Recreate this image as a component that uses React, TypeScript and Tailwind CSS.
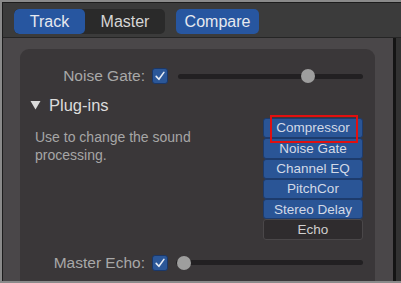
import React from "react";

function Check() {
  return (
    <div className="w-[16px] h-[16px] rounded-[3px] bg-[#2b5798] border border-[#1a3768] flex items-center justify-center shrink-0">
      <svg width="12" height="12" viewBox="0 0 12 12" fill="none">
        <path d="M2.2 6.4 L4.9 9.3 L9.9 2.4" stroke="#e6ecf5" strokeWidth="1.6" strokeLinecap="round" strokeLinejoin="round" />
      </svg>
    </div>
  );
}

function Slider({ width, pos }: { width: number; pos: number }) {
  return (
    <div className="relative h-[16px] flex items-center" style={{ width }}>
      <div className="w-full h-[5px] rounded-full bg-[#222022]" />
      <div
        className="absolute top-[1px] w-[14px] h-[14px] rounded-full bg-[#9e9e9e]"
        style={{ left: pos - 7 }}
      />
    </div>
  );
}

const plugins = [
  { name: "Compressor", on: true },
  { name: "Noise Gate", on: true },
  { name: "Channel EQ", on: true },
  { name: "PitchCor", on: true },
  { name: "Stereo Delay", on: true },
  { name: "Echo", on: false },
];

export default function App() {
  return (
    <div
      className="w-[401px] h-[283px] bg-[#8a8a8a] pt-[2px] pl-[2px] pb-[2px] flex flex-col overflow-hidden"
      style={{ fontFamily: '"Liberation Sans", Arial, sans-serif' }}
    >
      <div className="flex-1 bg-[#1c1c1c] pt-px pl-px flex flex-col min-h-0">
        {/* toolbar */}
        <div className="h-[35px] bg-[#3b3b3b] border-b border-[#252525] flex items-start pt-[6px] pl-[11px] shrink-0">
          <div className="flex h-[25px] rounded-[5px] bg-[#2a2a2a] overflow-hidden">
            <div className="w-[71px] bg-[#2756a0] text-[#e6e9ef] text-[16px] flex items-center justify-center rounded-[5px]">
              Track
            </div>
            <div className="w-[80px] text-[#d6d6d6] text-[16px] flex items-center justify-center">
              Master
            </div>
          </div>
          <div className="ml-[11px] w-[83px] h-[25px] rounded-[5px] bg-[#2756a0] text-[#e6e9ef] text-[16px] flex items-center justify-center">
            Compare
          </div>
        </div>
        {/* body */}
        <div className="flex-1 flex min-h-0">
          <div className="w-[390px] bg-[#4a4749] pl-[17px] pt-[11px] pr-[18px] flex flex-col">
            <div className="flex-1 bg-[#3a3739] rounded-t-[9px] flex flex-col relative">
              {/* noise gate row */}
              <div className="flex items-center mt-[19px] h-[16px]">
                <div className="w-[125px] text-right text-[15.5px] text-[#a8a8a8] leading-none">Noise Gate:</div>
                <div className="ml-[7px]">
                  <Check />
                </div>
                <div className="ml-[10px]">
                  <Slider width={185} pos={130} />
                </div>
              </div>
              {/* plug-ins header */}
              <div className="flex items-center h-[20px] mt-[11px] pl-[10px]">
                <svg width="11" height="10" viewBox="0 0 11 10">
                  <path d="M0.5 1 L10.5 1 L5.5 9.5 Z" fill="#dadada" />
                </svg>
                <span className="ml-[8px] text-[16.5px] text-[#dcdcdc] leading-none">Plug-ins</span>
              </div>
              {/* description + list */}
              <div className="flex mt-[3px]">
                <div className="w-[243px] pl-[15px] pt-[10px] text-[14px] leading-[18px] text-[#a6a6a6]">
                  Use to change the sound
                  <br />
                  processing.
                </div>
                <div className="w-[100px] flex flex-col relative">
                  {plugins.map((p) => (
                    <div
                      key={p.name}
                      className={
                        p.on
                          ? "h-[20.3px] bg-[#2a5596] border border-[#1d3b6c] rounded-[3px] text-[#d2d9e6] text-[13.5px] flex items-center justify-center leading-none"
                          : "h-[20.3px] bg-[#2f2c2e] border border-[#4a4749] rounded-[3px] text-[#cfcfcf] text-[13.5px] flex items-center justify-center leading-none"
                      }
                    >
                      {p.name}
                    </div>
                  ))}
                  <div className="absolute left-[7px] top-[-3px] w-[88px] h-[28px] border-2 border-[#e01010]" />
                </div>
              </div>
              {/* master echo row */}
              <div className="flex items-center mt-[15px] h-[16px]">
                <div className="w-[125px] text-right text-[15.5px] text-[#a8a8a8] leading-none">Master Echo:</div>
                <div className="ml-[7px]">
                  <Check />
                </div>
                <div className="ml-[8px]">
                  <Slider width={187} pos={8} />
                </div>
              </div>
            </div>
          </div>
          <div className="w-[3px] bg-[#141414]" />
          <div className="flex-1 bg-[#323232]" />
        </div>
      </div>
    </div>
  );
}
